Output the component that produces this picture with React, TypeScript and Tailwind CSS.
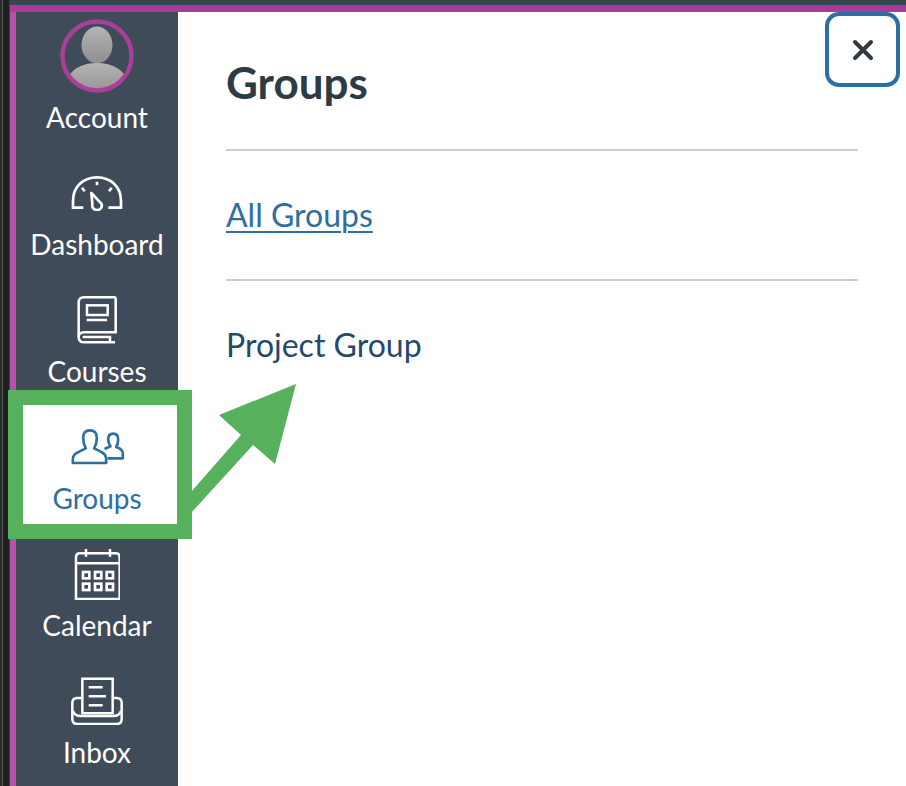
import type React from "react"

const NavItem: React.FC<{ label: string; active?: boolean; children: React.ReactNode }> = ({ label, active, children }) => (
  <div className={`h-[127px] shrink-0 flex flex-col items-center justify-end pb-[9px] ${active ? "bg-white text-[#2d6ea3]" : "text-white"}`}>
    {children}
    <span className="h-8 leading-[30px] text-[28px]">{label}</span>
  </div>
)

const IconBox: React.FC<{ children: React.ReactNode }> = ({ children }) => (
  <div className="h-[72px] flex items-center justify-center">{children}</div>
)

const DashboardIcon = () => (
  <svg width="54" height="36" viewBox="210 522 162 108" fill="none" stroke="currentColor" strokeWidth="8">
    <path d="M250 620H219V600C219 555 252 529 291 529C330 529 363 555 363 600V620H325" />
    <path d="M246 560L254 571M291 542V553M335 560L327 571" />
    <path d="M274 576L304 608C309 618 300 628 290 627C280 626 275 618 277 608Z" strokeLinejoin="round" />
  </svg>
)

const CoursesIcon = () => (
  <svg width="44" height="52" viewBox="225 72 132 156" fill="none" stroke="currentColor" strokeWidth="7.5">
    <path d="M347 82H252Q236 82 236 98V200Q236 217 252 217H345" />
    <path d="M347 82V187H252Q236 187 236 202" />
    <path d="M248 201H330V217" />
    <rect x="261" y="106" width="62" height="29" />
    <path d="M260 150H321" />
  </svg>
)

const GroupsIcon = () => (
  <svg width="57" height="40" viewBox="205 472 170 120" fill="none" stroke="currentColor" strokeWidth="8" strokeLinejoin="round">
    <path d="M216 580V568Q216 553 235 546L255 536Q247 522 247 505Q247 482 267 482Q288 482 288 505Q288 522 280 536L300 546Q316 553 316 568V580Z" />
    <path d="M311 538L329 530Q322 520 322 510Q322 492 337 492Q352 492 352 510Q352 522 346 532Q366 538 366 552V566H320" />
  </svg>
)

const CalendarIcon = () => (
  <svg width="46" height="52" viewBox="219 22 138 156" fill="none" stroke="currentColor" strokeWidth="7.5" className="mx-auto">
    <path d="M225 175V50Q225 38 237 38H345Q356 38 356 50V175Z" />
    <path d="M225 68H356M255 25V48M327 25V48" />
    <g strokeWidth="8">
      <rect x="246" y="94" width="19" height="19" />
      <rect x="282" y="94" width="19" height="19" />
      <rect x="317" y="94" width="19" height="19" />
      <rect x="246" y="129" width="19" height="19" />
      <rect x="282" y="129" width="19" height="19" />
      <rect x="317" y="129" width="19" height="19" />
    </g>
  </svg>
)

const InboxIcon = () => (
  <svg width="52" height="48" viewBox="213 409 156 144" fill="none" stroke="currentColor" strokeWidth="7.5">
    <path d="M247 518V414H338V518Z" />
    <path d="M266 440H308M266 467H318M266 494H308" />
    <path d="M247 472H232Q217 472 217 487V535Q217 550 232 550H350Q365 550 365 535V487Q365 472 350 472H338" />
    <path d="M219 510Q222 524 240 526H342Q360 524 363 510" />
  </svg>
)

const Avatar = () => (
  <svg width="74" height="74" viewBox="0 0 74 74" className="mb-[9px]">
    <defs>
      <linearGradient id="avatarFill" x1="0" y1="0" x2="0" y2="1">
        <stop offset="0" stopColor="#b4b4b4" />
        <stop offset="1" stopColor="#8e8e8e" />
      </linearGradient>
      <clipPath id="avatarClip">
        <circle cx="37" cy="37" r="34" />
      </clipPath>
    </defs>
    <g clipPath="url(#avatarClip)">
      <ellipse cx="37" cy="26" rx="15.5" ry="18.5" fill="url(#avatarFill)" />
      <ellipse cx="37" cy="62" rx="29" ry="18" fill="url(#avatarFill)" />
    </g>
    <circle cx="37" cy="37" r="34.5" fill="none" stroke="#a93f98" strokeWidth="4.5" />
  </svg>
)

export default function App() {
  return (
    <div className="relative w-[906px] h-[786px] overflow-hidden flex font-['Lato',sans-serif]">
      {/* window edge behind the screenshot */}
      <div className="w-[10px] shrink-0 flex">
        <div className="w-[2px] bg-[#2a2c2c]" />
        <div className="w-px bg-[#555a5a]" />
        <div className="w-[6px] bg-[#1d2120]" />
        <div className="w-px bg-[#3a3f41]" />
      </div>
      <div className="flex-1 min-w-0 flex flex-col">
        <div className="h-[5px] shrink-0 bg-[#34474d]" />
        <div className="h-[7px] shrink-0 bg-[#a83d97]" />
        <div className="flex flex-1 min-h-0">
          <div className="w-[6px] shrink-0 bg-[#b752ab]" />
          <nav className="w-[162px] shrink-0 bg-[#3f4b58] flex flex-col overflow-hidden pt-[4px]">
            <NavItem label="Account">
              <Avatar />
            </NavItem>
            <NavItem label="Dashboard">
              <IconBox>
                <DashboardIcon />
              </IconBox>
            </NavItem>
            <NavItem label="Courses">
              <IconBox>
                <CoursesIcon />
              </IconBox>
            </NavItem>
            <NavItem label="Groups" active>
              <IconBox>
                <GroupsIcon />
              </IconBox>
            </NavItem>
            <NavItem label="Calendar">
              <IconBox>
                <CalendarIcon />
              </IconBox>
            </NavItem>
            <NavItem label="Inbox">
              <IconBox>
                <InboxIcon />
              </IconBox>
            </NavItem>
          </nav>
          <main className="flex-1 bg-white pl-[48px] pr-[48px] pt-[46px] relative">
            <h2 className="h-[48px] leading-[48px] text-[44px] font-bold text-[#2d3b45]">Groups</h2>
            <div className="mt-[43px] h-[2px] bg-[#c7cdd1]" />
            <a href="#" className="block mt-[46px] h-[36px] leading-[36px] text-[32px] text-[#2d6ea3] underline underline-offset-[4px] decoration-2">
              All Groups
            </a>
            <div className="mt-[46px] h-[2px] bg-[#c7cdd1]" />
            <div className="mt-[46px] h-[36px] leading-[36px] text-[32px] text-[#1f4a6e]">Project Group</div>
            <button className="absolute top-0 right-[6px] w-[75px] h-[75px] rounded-[14px] border-4 border-[#2d6ea3] bg-white flex items-center justify-center text-[#2d3b45]">
              <svg width="22" height="22" viewBox="0 0 22 22" fill="none" stroke="currentColor" strokeWidth="4" strokeLinecap="round">
                <path d="M3 3L19 19M19 3L3 19" />
              </svg>
            </button>
          </main>
        </div>
      </div>

      {/* green callout drawn over the page */}
      <div className="absolute left-[8px] top-[390px] w-[184px] h-[149px] border-[15px] border-[#57b05c]" />
      <svg className="absolute left-0 top-0" width="906" height="786" viewBox="0 0 906 786">
        <polygon points="296,384 219,415 241,435 191,492 191,513 253,445 275,464" fill="#57b05c" />
      </svg>
    </div>
  )
}
